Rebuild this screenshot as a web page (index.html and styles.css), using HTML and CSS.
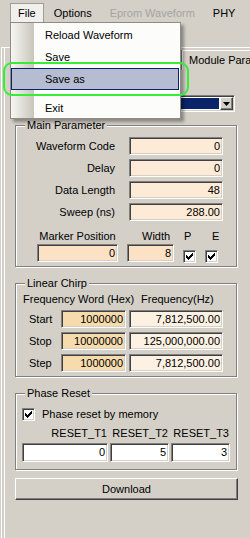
FILE: index.html
```html
<!DOCTYPE html>
<html lang="en">
<head>
  <meta charset="UTF-8">
  <title>Waveform</title>
  <link rel="stylesheet" href="styles.css">
</head>
<body>
  <div class="menubar">
    <span class="menu-item open">File</span>
    <span class="menu-item">Options</span>
    <span class="menu-item disabled">Eprom Waveform</span>
    <span class="menu-item">PHY</span>
  </div>

  <div class="outer">
    <div class="inner">
      <div class="tabrow">
        <span class="tab">Module Parameter</span>
      </div>

      <div class="combo">
        <span class="combo-value"></span>
        <span class="combo-btn">
          <svg width="7" height="4" viewBox="0 0 7 4"><polygon points="0,0 7,0 3.5,4" fill="#000"/></svg>
        </span>
      </div>

      <fieldset class="group main">
        <legend>Main Parameter</legend>
        <div class="rows">
          <span class="label">Waveform Code</span>
          <span class="field">0</span>
          <span class="label">Delay</span>
          <span class="field">0</span>
          <span class="label">Data Length</span>
          <span class="field">48</span>
          <span class="label">Sweep (ns)</span>
          <span class="field">288.00</span>
        </div>
        <div class="marker">
          <span class="cap cap-marker">Marker Position</span>
          <span class="cap cap-width">Width</span>
          <span class="cap cap-p">P</span>
          <span class="cap cap-e">E</span>
          <span class="field strong">0</span>
          <span class="field strong">8</span>
          <span class="check on"></span>
          <span class="check on"></span>
        </div>
      </fieldset>

      <fieldset class="group chirp">
        <legend>Linear Chirp</legend>
        <div class="chirp-head">
          <span class="head-hex">Frequency Word (Hex)</span>
          <span>Frequency(Hz)</span>
        </div>
        <div class="chirp-grid">
          <span class="row-label">Start</span>
          <span class="field hex">1000000</span>
          <span class="field freq">7,812,500.00</span>
          <span class="row-label">Stop</span>
          <span class="field hex">10000000</span>
          <span class="field freq">125,000,000.00</span>
          <span class="row-label">Step</span>
          <span class="field hex">1000000</span>
          <span class="field freq">7,812,500.00</span>
        </div>
      </fieldset>

      <fieldset class="group phase">
        <legend>Phase Reset</legend>
        <div class="check-row">
          <span class="check on"></span>
          <span>Phase reset by memory</span>
        </div>
        <div class="reset-grid">
          <span class="reset-head">RESET_T1</span>
          <span class="reset-head">RESET_T2</span>
          <span class="reset-head">RESET_T3</span>
          <span class="field white">0</span>
          <span class="field white">5</span>
          <span class="field white">3</span>
        </div>
      </fieldset>

      <div class="button">Download</div>
    </div>
  </div>

  <div class="dropdown">
    <div class="dropdown-item">Reload Waveform</div>
    <div class="dropdown-item">Save</div>
    <div class="dropdown-item active">Save as</div>
    <div class="separator"></div>
    <div class="dropdown-item exit">Exit</div>
  </div>
  <div class="callout"></div>

  <script>
    // draw the check marks
    document.querySelectorAll('.check.on').forEach(box => {
      box.innerHTML = '<svg width="7" height="7" viewBox="0 0 7 7"><path d="M6 0H7V3H6V4H5V5H4V6H3V7H2V6H1V5H0V2H1V3H2V4H3V3H4V2H5V1H6Z" fill="#000"/></svg>';
    });
  </script>
</body>
</html>
```

FILE: styles.css
```css
body {
  margin: 0;
  width: 250px;
  height: 538px;
  overflow: hidden;
  position: relative;
  background: #d4d0c8;
  font-family: "Liberation Sans", Arial, sans-serif;
  font-size: 11px;
  color: #000;
}

/* menu */
.menubar {
  display: flex;
  gap: 2px;
  height: 22px;
  padding-left: 10px;
}
.menu-item {
  margin-top: 3px;
  padding: 0 7px;
  line-height: 18px;
  border: 1px solid transparent;
  border-bottom: 0;
  white-space: nowrap;
}
.menu-item.open {
  border-color: #a09d96;
  background: #f1f0ec;
}
.menu-item.disabled {
  color: #a6a49e;
}

.dropdown {
  position: absolute;
  left: 10px;
  top: 22px;
  width: 171px;
  box-sizing: border-box;
  padding-top: 1px;
  border: 1px solid #8f8c85;
  background: linear-gradient(to right, #f7f6f2, #c8c5bc) 0 0 / 23px 100% no-repeat, #fcfcfa;
  box-shadow: 3px 3px 3px rgba(0, 0, 0, 0.35);
}
.dropdown-item {
  height: 22px;
  line-height: 22px;
  padding-left: 34px;
}
.dropdown-item.active {
  box-sizing: border-box;
  margin-right: 1px;
  padding-left: 33px;
  line-height: 20px;
  background: #b6bdd2;
  border: 1px solid #0a246a;
}
.dropdown-item.exit {
  height: 19px;
  line-height: 19px;
}
.separator {
  height: 1px;
  margin: 4px 1px 4px 31px;
  background: #c5c2b8;
}

.callout {
  position: absolute;
  left: 3px;
  top: 62px;
  width: 186px;
  height: 34px;
  box-sizing: border-box;
  border: 2px solid #36ee36;
  border-radius: 9px;
}

/* frame */
.outer {
  margin: 25px 0 0 1px;
  padding-left: 2px;
  height: 490px;
  border-top: 1px solid #fff;
  border-left: 1px solid #fff;
}
.inner {
  height: 100%;
  padding: 2px 0 0 10px;
  border-left: 1px solid #fff;
}
.tabrow {
  display: flex;
  height: 20px;
  padding-left: 167px;
  overflow: hidden;
  white-space: nowrap;
}
.tab {
  flex: none;
  padding-left: 6px;
  line-height: 19px;
  border-top: 1px solid #fff;
  border-left: 1px solid #fff;
  box-shadow: -1px 0 #808080;
}

.combo {
  display: flex;
  box-sizing: border-box;
  width: 160px;
  height: 17px;
  margin: 25px 0 0 60px;
  padding: 1px;
  background: #fff;
  border: 1px solid;
  border-color: #808080 #fff #fff #808080;
  box-shadow: inset 1px 1px #404040, inset -1px -1px #d4d0c8;
}
.combo-value {
  flex: 1;
  margin: 1px 1px 1px 1px;
  background: #0a246a;
}
.combo-btn {
  display: flex;
  align-items: center;
  justify-content: center;
  width: 13px;
  box-sizing: border-box;
  background: #d4d0c8;
  border: 1px solid;
  border-color: #fff #404040 #404040 #fff;
  box-shadow: inset -1px -1px #808080;
}

/* group boxes */
.group {
  width: 222px;
  min-width: 0;
  box-sizing: border-box;
  margin: 0 0 10px 0;
  padding: 0 0 4px 0;
  border: 1px solid #808080;
  box-shadow: inset 1px 1px #fff, 1px 1px #fff;
}
.group.main {
  margin-top: 7px;
}
.group.phase {
  margin-bottom: 0;
  padding-bottom: 7px;
}
.group legend {
  margin-left: 9px;
  padding: 0 2px;
  line-height: 13px;
  background: #d4d0c8;
}

.field {
  box-sizing: border-box;
  height: 18px;
  padding: 0 2px;
  line-height: 16px;
  text-align: right;
  white-space: nowrap;
  background: #fdebd7;
  border: 1px solid;
  border-color: #808080 #fff #fff #808080;
  box-shadow: inset 1px 1px #404040, inset -1px -1px #d4d0c8;
}
.field.strong {
  background: #fde1c4;
}
.field.hex {
  background: #f6dbad;
}
.field.freq {
  background: #fdf1e3;
}
.field.white {
  height: 19px;
  line-height: 17px;
  background: #fff;
}

.check {
  display: flex;
  align-items: center;
  justify-content: center;
  box-sizing: border-box;
  width: 13px;
  height: 13px;
  background: #fff;
  border: 1px solid;
  border-color: #808080 #fff #fff #808080;
  box-shadow: inset 1px 1px #404040, inset -1px -1px #d4d0c8;
}

/* main parameter */
.rows {
  display: grid;
  grid-template-columns: 99px 94px;
  column-gap: 14px;
  row-gap: 4px;
  padding-top: 5px;
}
.label {
  line-height: 18px;
  text-align: right;
  white-space: nowrap;
}
.marker {
  display: grid;
  grid-template-columns: 81px 47px 13px 13px;
  column-gap: 9px;
  row-gap: 1px;
  margin: 8px 0 0 21px;
}
.cap {
  line-height: 14px;
  white-space: nowrap;
}
.cap-marker {
  text-align: center;
}
.cap-width {
  margin-left: 15px;
}
.cap-p {
  margin-left: 1px;
}
.cap-e {
  margin-left: 7px;
}
.marker .check {
  align-self: end;
  margin-bottom: -1px;
}

/* linear chirp */
.chirp-head {
  display: flex;
  margin-top: 2px;
  line-height: 14px;
  white-space: nowrap;
}
.head-hex {
  width: 125px;
  padding-left: 7px;
  box-sizing: border-box;
}
.chirp-grid {
  display: grid;
  grid-template-columns: 42px 65px 94px;
  column-gap: 3px;
  row-gap: 4px;
  margin-top: 4px;
}
.row-label {
  padding-left: 13px;
  line-height: 18px;
}

/* phase reset */
.check-row {
  display: flex;
  align-items: center;
  gap: 7px;
  height: 14px;
  margin: 7px 0 0 6px;
}
.reset-grid {
  display: grid;
  grid-template-columns: 86px 59px 59px;
  column-gap: 2px;
  row-gap: 3px;
  margin: 5px 0 0 6px;
}
.reset-head {
  padding-right: 1px;
  line-height: 14px;
  text-align: right;
}

.button {
  box-sizing: border-box;
  width: 223px;
  height: 22px;
  margin-top: 8px;
  line-height: 20px;
  text-align: center;
  border: 1px solid;
  border-color: #fff #404040 #404040 #fff;
  box-shadow: inset -1px -1px #808080;
}
```
